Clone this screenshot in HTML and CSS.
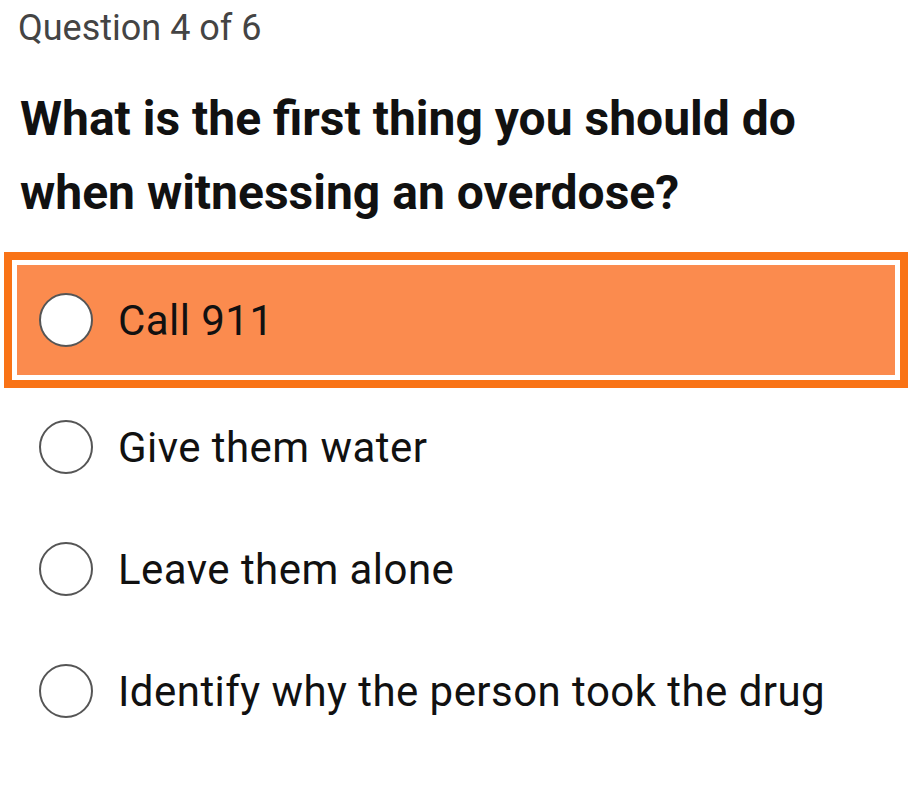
FILE: index.html
```html
<!DOCTYPE html>
<html lang="en">
<head>
    <meta charset="UTF-8">
    <title>Quiz</title>
    <link rel="stylesheet" href="styles.css">
</head>
<body>

    <!-- Progress -->
    <div class="progress">Question 4 of 6</div>

    <!-- Question -->
    <h1 class="question">What is the first thing you should do when witnessing an overdose?</h1>

    <!-- Answers -->
    <div class="options">
        <label class="option selected">
            <span class="radio"></span>
            <span class="option-text">Call 911</span>
        </label>
        <label class="option">
            <span class="radio"></span>
            <span class="option-text">Give them water</span>
        </label>
        <label class="option">
            <span class="radio"></span>
            <span class="option-text">Leave them alone</span>
        </label>
        <label class="option">
            <span class="radio"></span>
            <span class="option-text">Identify why the person took the drug</span>
        </label>
    </div>

</body>
</html>
```

FILE: styles.css
```css
body {
    font-family: Roboto, 'Liberation Sans', sans-serif;
    background-color: #fff;
    color: #111;
    margin: 0;
    padding: 0;
}

.progress {
    font-size: 36px;
    color: #444;
    padding: 6px 0 0 18px;
    line-height: 44px;
}

.question {
    font-size: 48px;
    font-weight: bold;
    line-height: 74px;
    margin: 32px 0 0 20px;
    max-width: 880px;
}

.options {
    padding-top: 35px;
}

.option {
    display: flex;
    align-items: center;
    height: 122px;
    padding-left: 39px;
    box-sizing: border-box;
}

/* selected answer: orange frame with a white gap */
.option.selected {
    height: 110px;
    margin: 0 18px 11px 17px;
    padding-left: 22px;
    background-color: #fb8b4e;
    box-shadow: 0 0 0 5px #fff, 0 0 0 13px #f97316;
}

.radio {
    width: 50px;
    height: 50px;
    border: 2px solid #555;
    border-radius: 50%;
    background-color: #fff;
    flex-shrink: 0;
    margin-right: 25px;
}

.option-text {
    font-size: 42px;
    letter-spacing: 0.45px;
}
```
